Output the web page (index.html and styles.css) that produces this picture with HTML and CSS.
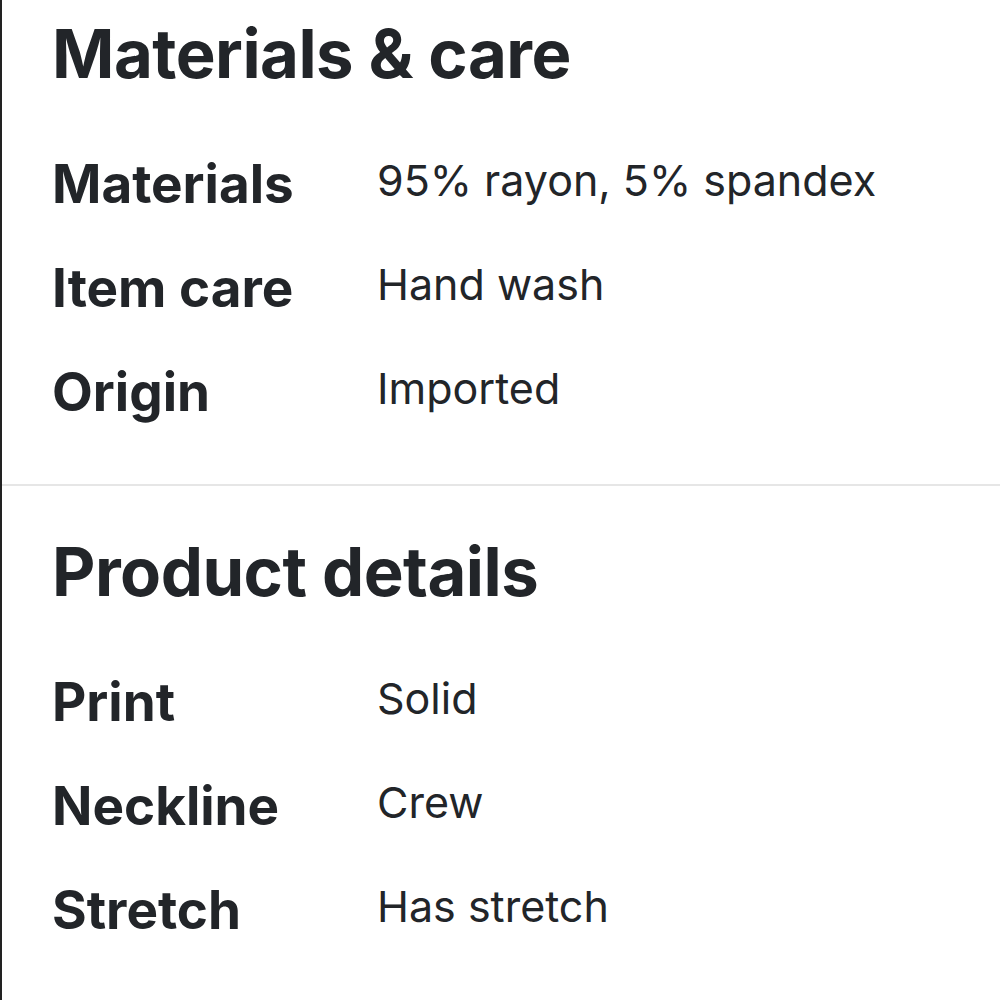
FILE: index.html
```html
<!DOCTYPE html>
<html lang="en">
<head>
  <meta charset="UTF-8" />
  <meta name="viewport" content="width=device-width, initial-scale=1.0">
  <title>Materials &amp; care</title>
  <link rel="stylesheet" href="styles.css">
</head>
<body>
  <div class="panel">
    <section class="spec-section">
      <h2>Materials &amp; care</h2>
      <dl class="spec-list">
        <dt>Materials</dt>
        <dd>95% rayon, 5% spandex</dd>
        <dt>Item care</dt>
        <dd>Hand wash</dd>
        <dt>Origin</dt>
        <dd>Imported</dd>
      </dl>
    </section>

    <section class="spec-section">
      <h2>Product details</h2>
      <dl class="spec-list">
        <dt>Print</dt>
        <dd>Solid</dd>
        <dt>Neckline</dt>
        <dd>Crew</dd>
        <dt>Stretch</dt>
        <dd>Has stretch</dd>
      </dl>
    </section>
  </div>
</body>
</html>
```

FILE: styles.css
```css
body {
  margin: 0;
  font-family: Inter, "Noto Sans", sans-serif;
  color: #222529;
  background: #fff;
}
.panel {
  border-left: 2px solid #222;
  min-height: 1000px;
  box-sizing: border-box;
}
.spec-section {
  padding: 12px 0 62px 50px;
}
.spec-section + .spec-section {
  border-top: 2px solid #e6e6e6;
  padding-top: 44px;
}
.spec-section h2 {
  margin: 0 0 58px;
  font-size: 67px;
  font-weight: 700;
  line-height: 84px;
  letter-spacing: -0.5px;
}
.spec-list {
  display: grid;
  grid-template-columns: 325px 1fr;
  row-gap: 44px;
  margin: 0;
  align-items: start;
}
.spec-list dt {
  font-size: 53px;
  font-weight: 700;
  line-height: 60px;
}
.spec-list dd {
  margin: 0;
  font-size: 43px;
  font-weight: 400;
  line-height: 53px;
}
```
